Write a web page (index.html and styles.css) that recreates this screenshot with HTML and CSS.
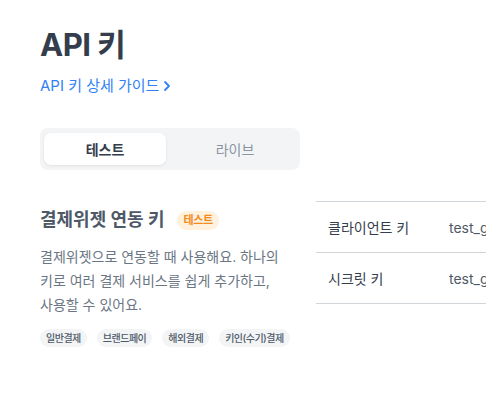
FILE: index.html
```html
<!DOCTYPE html>
<html lang="ko">
<head>
<meta charset="UTF-8">
<meta name="viewport" content="width=device-width, initial-scale=1.0">
<title>API 키</title>
<link rel="stylesheet" href="styles.css">
</head>
<body>
<div class="page">
  <h1 class="title">API 키</h1>
  <a class="guide-link" href="#">API 키 상세 가이드
    <svg width="10" height="12" viewBox="0 0 10 12"><path d="M3 2l4 4-4 4" fill="none" stroke="#3182f6" stroke-width="1.8" stroke-linecap="round" stroke-linejoin="round"/></svg>
  </a>

  <div class="tabs">
    <button class="tab active">테스트</button>
    <button class="tab">라이브</button>
  </div>

  <div class="section">
    <div class="info">
      <h2 class="section-title">결제위젯 연동 키 <span class="badge">테스트</span></h2>
      <p class="desc">결제위젯으로 연동할 때 사용해요. 하나의 키로 여러 결제 서비스를 쉽게 추가하고, 사용할 수 있어요.</p>
      <div class="tags">
        <span class="tag">일반결제</span>
        <span class="tag">브랜드페이</span>
        <span class="tag">해외결제</span>
        <span class="tag">키인(수기)결제</span>
      </div>
    </div>
    <div class="keys">
      <div class="key-row">
        <span class="key-label">클라이언트 키</span>
        <span class="key-value">test_gck_docs_Ovk5rk1EwkEbP0W43n07xlzm</span>
      </div>
      <div class="key-row">
        <span class="key-label">시크릿 키</span>
        <span class="key-value">test_gsk_docs_OaPz8L5KdmQXkzRz3y47BMw6</span>
      </div>
    </div>
  </div>
</div>
</body>
</html>
```

FILE: styles.css
```css
body {
  margin: 0;
  padding: 0;
  font-family: Inter, "Noto Sans CJK KR", sans-serif;
  color: #333d4b;
  background-color: #fff;
  overflow: hidden;
}

.page {
  padding: 24px 0 0 40px;
}

.title {
  margin: 0;
  font-size: 31px;
  font-weight: 700;
  line-height: 42px;
  letter-spacing: -0.5px;
}

.guide-link {
  display: inline-flex;
  align-items: center;
  gap: 3px;
  margin-top: 8px;
  font-size: 15px;
  line-height: 24px;
  color: #3182f6;
  text-decoration: none;
}

.tabs {
  display: grid;
  grid-template-columns: 1fr 1fr;
  gap: 8px;
  width: 252px;
  margin-top: 30px;
  padding: 5px 4px;
  background-color: #f2f4f6;
  border-radius: 8px;
}

.tab {
  height: 32px;
  border: none;
  border-radius: 7px;
  background: transparent;
  font-family: inherit;
  font-size: 14px;
  color: #8b95a1;
  cursor: pointer;
}

.tab.active {
  background-color: #fff;
  color: #333d4b;
  font-weight: 700;
  box-shadow: 0 1px 3px rgba(0, 0, 0, 0.08);
}

.section {
  display: flex;
  align-items: flex-start;
  margin-top: 31px;
}

.info {
  width: 260px;
  flex-shrink: 0;
  padding-top: 6px;
}

.section-title {
  display: flex;
  align-items: center;
  gap: 13px;
  margin: 0;
  font-size: 18px;
  font-weight: 700;
  line-height: 26px;
  color: #4e5968;
}

.badge {
  padding: 0 6px;
  height: 19px;
  line-height: 19px;
  border-radius: 10px;
  background-color: #fff1dc;
  color: #f18c1c;
  font-size: 11px;
  font-weight: 700;
  letter-spacing: -0.3px;
}

.desc {
  margin: 12px 0 0;
  width: 245px;
  font-size: 14px;
  line-height: 24px;
  color: #6b7684;
}

.tags {
  display: flex;
  gap: 10px;
  margin-top: 12px;
}

.tag {
  padding: 0 6px;
  height: 18px;
  line-height: 18px;
  border-radius: 9px;
  background-color: #f2f4f6;
  color: #4e5968;
  font-size: 10px;
  font-weight: 500;
  letter-spacing: -0.5px;
}

.keys {
  flex: 1;
  min-width: 0;
  margin-left: 16px;
  border-top: 1px solid #d1d6db;
  overflow: hidden;
}

.key-row {
  display: flex;
  align-items: center;
  height: 50px;
  padding-left: 12px;
  border-bottom: 1px solid #d1d6db;
  font-size: 14px;
  white-space: nowrap;
}

.key-label {
  width: 121px;
  flex-shrink: 0;
  color: #333d4b;
}

.key-value {
  color: #4e5968;
}
```
